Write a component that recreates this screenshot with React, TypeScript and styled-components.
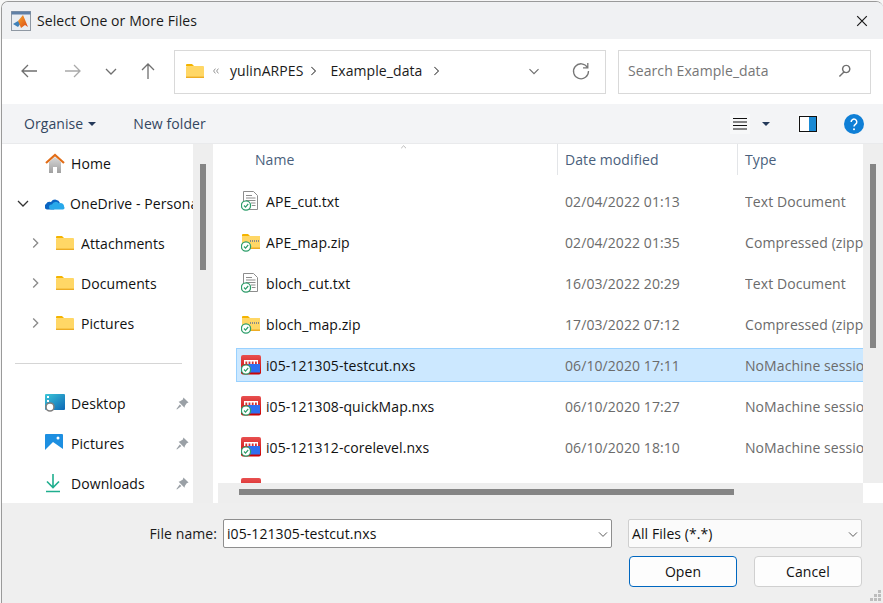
import styled, { createGlobalStyle } from "styled-components";

const GlobalStyle = createGlobalStyle`
  html, body {
    margin: 0;
    padding: 0;
    background: #fff;
  }
  body {
    font-family: "Open Sans", "Noto Sans", sans-serif;
    font-size: 14px;
    letter-spacing: 0.08px;
    color: #1a1a1a;
  }
`;

const Page = styled.div`
  width: 883px;
  height: 603px;
  padding: 1px 0 0 1px;
  box-sizing: border-box;
  overflow: hidden;
  background: #f6f6f6;
`;

const Dialog = styled.div`
  width: 882px;
  height: 602px;
  box-sizing: border-box;
  border: 1px solid #9a9a9a;
  border-right: 0;
  border-bottom: 0;
  border-radius: 7px 7px 0 0;
  overflow: hidden;
  display: flex;
  flex-direction: column;
  background: #fff;
`;

const TitleBar = styled.div`
  height: 37px;
  flex: none;
  display: flex;
  align-items: center;
  padding: 0 13px 0 9px;
  background: #f0f1f3;
  gap: 6px;
`;

const Title = styled.div`
  flex: 1;
`;

const NavBar = styled.div`
  height: 65px;
  flex: none;
  display: flex;
  align-items: center;
  background: #fff;
`;

const NavButton = styled.div<{ $w: number }>`
  width: ${(p) => p.$w}px;
  display: flex;
  justify-content: center;
  flex: none;
`;

const NavButtons = styled.div`
  width: 172px;
  flex: none;
  display: flex;
  padding: 0 0 1px 5px;
  box-sizing: border-box;
`;

const AddressBox = styled.div`
  width: 432px;
  height: 44px;
  box-sizing: border-box;
  border: 1px solid #d9d9d9;
  display: flex;
  align-items: center;
  padding: 0 0 2px 11px;
  flex: none;
`;

const Crumb = styled.span<{ $left: number }>`
  margin-left: ${(p) => p.$left}px;
  color: #1a1a1a;
`;

const CrumbMark = styled.span<{ $left: number }>`
  margin-left: ${(p) => p.$left}px;
  display: flex;
`;

const SearchBox = styled.div`
  width: 253px;
  height: 44px;
  margin-left: 12px;
  box-sizing: border-box;
  border: 1px solid #d9d9d9;
  display: flex;
  align-items: center;
  justify-content: space-between;
  padding: 0 17px 2px 9px;
  color: #767676;
  flex: none;
`;

const ToolBar = styled.div`
  height: 39px;
  flex: none;
  display: flex;
  align-items: center;
  background: #f3f4f6;
  padding: 0 18px 0 22px;
  color: #33465f;
`;

const ToolLabel = styled.span`
  color: #33465f;
`;

const Caret = styled.span<{ $left: number }>`
  width: 0;
  height: 0;
  margin-left: ${(p) => p.$left}px;
  border-left: 4px solid transparent;
  border-right: 4px solid transparent;
  border-top: 4px solid #24395a;
`;

const NewFolder = styled(ToolLabel)`
  margin-left: 37px;
  flex: 1;
`;

const ToolIcon = styled.span<{ $left: number; $w: number; $tile?: boolean }>`
  width: ${(p) => p.$w}px;
  height: 20px;
  margin-left: ${(p) => p.$left}px;
  display: flex;
  align-items: center;
  justify-content: center;
  background: ${(p) => (p.$tile ? "#f7f8f9" : "transparent")};
`;

const Content = styled.div`
  height: 360px;
  flex: none;
  display: flex;
  background: #fff;
  border-top: 1px solid #e9eaec;
  box-sizing: border-box;
`;

const Sidebar = styled.div`
  width: 191px;
  flex: none;
  overflow: hidden;
  background: #fff;
`;

const NavItem = styled.div<{ $icon: number }>`
  height: 40px;
  box-sizing: border-box;
  display: flex;
  align-items: center;
  white-space: nowrap;
  padding: 0 0 2px ${(p) => p.$icon}px;
`;

const Chevron = styled.span<{ $w: number }>`
  width: ${(p) => p.$w}px;
  flex: none;
  display: flex;
`;

const NavIcon = styled.span<{ $w: number }>`
  width: ${(p) => p.$w}px;
  flex: none;
  display: flex;
`;

const NavLabel = styled.span`
  flex: 1;
  overflow: hidden;
  color: #111;
`;

const PinSlot = styled.span`
  width: 17px;
  flex: none;
  display: flex;
`;

const Divider = styled.div`
  height: 1px;
  margin: 19px 11px 20px 13px;
  background: #d5d5d5;
`;

const VScroll = styled.div<{ $pad: number; $thumb: number }>`
  width: 20px;
  flex: 1;
  background: #eeeeee;
  padding-top: ${(p) => p.$pad}px;
  box-sizing: border-box;
  &::before {
    content: "";
    display: block;
    width: 6px;
    height: ${(p) => p.$thumb}px;
    margin-left: 7px;
    background: #858585;
  }
`;

const ScrollColumn = styled.div`
  width: 20px;
  flex: none;
  display: flex;
  flex-direction: column;
`;

const ScrollCorner = styled.div`
  height: 20px;
  flex: none;
  background: #fff;
`;

const Gutter = styled.div`
  width: 5px;
  flex: none;
  background: #fff;
`;

const FilePane = styled.div`
  width: 645px;
  flex: none;
  display: flex;
  flex-direction: column;
  background: #fff;
`;

const HeaderRow = styled.div`
  height: 40px;
  flex: none;
  display: grid;
  grid-template-columns: 340px 180px 125px;
  position: relative;
  color: #4a5f7c;
`;

const HeaderCell = styled.div<{ $pad: number; $line?: boolean }>`
  padding-left: ${(p) => p.$pad}px;
  padding-top: 6px;
  box-sizing: border-box;
  border-right: ${(p) => (p.$line ? "1px solid #e3e5e8" : "0")};
  height: 31px;
`;

const SortMark = styled.span`
  position: absolute;
  left: 182px;
  top: 0;
  display: flex;
`;

const Rows = styled.div`
  flex: 1;
  overflow: hidden;
  padding-left: 18px;
  display: flex;
  flex-direction: column;
  gap: 7px;
`;

const FileRow = styled.div<{ $selected?: boolean }>`
  height: 34px;
  flex: none;
  box-sizing: border-box;
  display: grid;
  grid-template-columns: 328px 180px 1fr;
  align-items: center;
  white-space: nowrap;
  overflow: hidden;
  background: ${(p) => (p.$selected ? "#cce8ff" : "transparent")};
  border: 1px solid ${(p) => (p.$selected ? "#99d1ff" : "transparent")};
  border-right: 0;
`;

const NameCell = styled.div`
  display: flex;
  align-items: center;
  gap: 5px;
  padding-left: 4px;
  color: #111;
`;

const MetaCell = styled.div`
  color: #6b6b6b;
  overflow: hidden;
`;

const HScroll = styled.div`
  height: 20px;
  flex: none;
  background: #eeeeee;
  padding: 6px 0 0 21px;
  box-sizing: border-box;
  &::before {
    content: "";
    display: block;
    width: 495px;
    height: 6px;
    background: #858585;
  }
`;

const Footer = styled.div`
  flex: 1;
  background: #efefef;
  position: relative;
  display: grid;
  grid-template-columns: 215px 389px 244px;
  grid-template-rows: 29px 31px;
  column-gap: 6px;
  row-gap: 8px;
  align-content: start;
  padding-top: 16px;
`;

const FileLabel = styled.label`
  justify-self: end;
  align-self: center;
  color: #1a1a1a;
`;

const ComboBox = styled.div<{ $strong?: boolean }>`
  height: 29px;
  box-sizing: border-box;
  background: ${(p) => (p.$strong ? "#fff" : "#fbfbfb")};
  border: 1px solid ${(p) => (p.$strong ? "#8e8e8e" : "#cfcfcf")};
  border-radius: 2px;
  display: flex;
  align-items: center;
  justify-content: space-between;
  padding: 0 0 0 3px;
  color: #111;
`;

const FilterBox = styled(ComboBox)`
  margin-left: 10px;
`;

const Buttons = styled.div`
  grid-column: 3;
  display: flex;
  gap: 17px;
  margin-left: 11px;
`;

const ActionButton = styled.button<{ $primary?: boolean }>`
  width: 108px;
  height: 31px;
  padding: 0;
  font: inherit;
  letter-spacing: inherit;
  color: #111;
  background: #fdfdfd;
  border: 1px solid ${(p) => (p.$primary ? "#0067c0" : "#d0d0d0")};
  border-radius: 4px;
`;

const Grip = styled.span`
  position: absolute;
  right: 1px;
  bottom: 1px;
  display: flex;
`;

function MatlabLogo() {
  return (
    <svg width="20" height="20" viewBox="0 0 20 20">
      <defs>
        <linearGradient id="peak" x1="0" y1="0" x2="1" y2="1">
          <stop offset="0" stopColor="#f7a428" />
          <stop offset="1" stopColor="#d8481a" />
        </linearGradient>
      </defs>
      <rect x="0.5" y="0.5" width="19" height="19" fill="#e9edf2" stroke="#8f98a3" />
      <rect x="0.5" y="0.5" width="19" height="3" fill="#5f7fa6" />
      <path d="M2 13 L7 10 L10 12 L7 16 Z" fill="#3d7fb8" />
      <path d="M7 10 L12 4 L17 16 L14 14 L10 17 L8 12 Z" fill="url(#peak)" />
    </svg>
  );
}

function FolderIcon({ size = 18 }: { size?: number }) {
  return (
    <svg width={size} height={(size * 14) / 18} viewBox="0 0 18 14">
      <path d="M0 1 a1 1 0 0 1 1-1 h5 l2 2 h-8 z" fill="#f4b400" />
      <rect x="0" y="2" width="18" height="12" rx="1" fill="#ffd766" />
      <rect x="0" y="12.6" width="18" height="1.4" fill="#edac24" />
    </svg>
  );
}

function Line({ d, color = "#6f6f6f", size = 20, width = 1.3 }: { d: string; color?: string; size?: number; width?: number }) {
  return (
    <svg width={size} height={size} viewBox="0 0 20 20" fill="none" stroke={color} strokeWidth={width}>
      <path d={d} />
    </svg>
  );
}

const chevronDown = "M5 8 L10 13 L15 8";
const chevronRight = "M8 5 L13 10 L8 15";

function HomeIcon() {
  return (
    <svg width="20" height="20" viewBox="0 0 20 20">
      <defs>
        <linearGradient id="homeBody" x1="0" y1="0" x2="0" y2="1">
          <stop offset="0" stopColor="#d8d8d8" />
          <stop offset="1" stopColor="#a0a0a0" />
        </linearGradient>
      </defs>
      <path d="M4 9 L10 4 L16 9 V20 H12 V14 H8 V20 H4 Z" fill="url(#homeBody)" />
      <path d="M1 10 L10 2 L19 10" fill="none" stroke="#e26d17" strokeWidth="2.2" />
    </svg>
  );
}

function CloudIcon() {
  return (
    <svg width="20" height="14" viewBox="0 0 20 14">
      <path d="M2 13.5 a3 3 0 0 1 -1-5.5 a4 4 0 0 1 5-2 a5 5 0 0 1 9 1 L9 13.5 Z" fill="#0a64c2" />
      <path d="M6 13.5 a2.5 2.5 0 0 1 1-5 a4 4 0 0 1 7-1 a3.2 3.2 0 0 1 5 3 a2 2 0 0 1 -1 3 Z" fill="#28a8ea" />
    </svg>
  );
}

function DesktopIcon() {
  return (
    <svg width="20" height="18" viewBox="0 0 20 18">
      <defs>
        <linearGradient id="desk" x1="0" y1="0" x2="1" y2="1">
          <stop offset="0" stopColor="#3cc6d8" />
          <stop offset="1" stopColor="#0d66b5" />
        </linearGradient>
      </defs>
      <rect x="0" y="0" width="20" height="16" rx="1" fill="url(#desk)" />
      <rect x="2" y="2" width="2" height="2" fill="#fff" />
      <rect x="2" y="6" width="2" height="2" fill="#fff" />
      <circle cx="5" cy="13" r="4" fill="#fff" stroke="#7f7f7f" strokeWidth="1.6" />
    </svg>
  );
}

function PicturesIcon() {
  return (
    <svg width="18" height="18" viewBox="0 0 18 18">
      <rect width="18" height="18" rx="1" fill="#1d8fe1" />
      <circle cx="13" cy="4" r="1.5" fill="#fff" />
      <path d="M0 16 L8 8 L18 15 V18 H0 Z" fill="#fff" />
    </svg>
  );
}

function DownloadIcon() {
  return (
    <svg width="16" height="20" viewBox="0 0 16 20" fill="none" stroke="#1fae8e" strokeWidth="1.6">
      <path d="M8 1 V14 M2 8.5 L8 14.5 L14 8.5 M1 18.5 H15" />
    </svg>
  );
}

function PinIcon() {
  return (
    <svg width="13" height="13" viewBox="0 0 14 14" fill="#9aa0a6">
      <path d="M8 0.5 L13.5 6 L11.5 6.8 L9.5 9.8 L9.2 11.5 L2.8 5 L4.4 4.6 L7.4 2.6 Z" />
      <path d="M4 8 L5.8 9.8 L1 13.5 L0.5 13 Z" />
    </svg>
  );
}

function SyncBadge() {
  return (
    <g>
      <circle cx="5" cy="14.5" r="4.6" fill="#fff" stroke="#2e9e6b" strokeWidth="1.3" />
      <path d="M3 14.5 L4.5 16.1 L7.2 13" fill="none" stroke="#2e9e6b" strokeWidth="1.2" />
    </g>
  );
}

function TextFileIcon() {
  return (
    <svg width="20" height="20" viewBox="0 0 20 20">
      <path d="M2.5 0.5 H12.5 L16.5 4.5 V18.5 H2.5 Z" fill="#fff" stroke="#8d8d8d" />
      <path d="M5 4.5 H11 M5 7 H14.5 M5 9.5 H14.5 M10 12 H14.5 M11 14.5 H14.5" stroke="#8d8d8d" />
      <SyncBadge />
    </svg>
  );
}

function ZipIcon() {
  return (
    <svg width="20" height="20" viewBox="0 0 20 20">
      <path d="M1 3 a1 1 0 0 1 1-1 h5 l2 2 H1 Z" fill="#f4b400" />
      <rect x="1" y="4" width="18" height="13" fill="#ffd766" />
      <rect x="1" y="15.5" width="18" height="1.5" fill="#edac24" />
      <path d="M9 9 H19" stroke="#8a8a8a" strokeWidth="2" strokeDasharray="1 1" />
      <SyncBadge />
    </svg>
  );
}

function SessionIcon() {
  return (
    <svg width="20" height="20" viewBox="0 0 20 20">
      <defs>
        <linearGradient id="sessionRed" x1="0" y1="0" x2="0" y2="1">
          <stop offset="0" stopColor="#e85050" />
          <stop offset="1" stopColor="#c80000" />
        </linearGradient>
      </defs>
      <rect x="0" y="0" width="20" height="19.5" rx="2" fill="url(#sessionRed)" />
      <path d="M3 5 H17 V9 H15.8 V6.5 H14 V9 H12.6 V6.5 H10.8 V9 H9.4 V6.5 H7.6 V9 H6.2 V6.5 H4.4 V9 H3 Z" fill="#fff" />
      <rect x="7" y="9" width="12" height="8.5" fill="#2f6ff0" />
      <SyncBadge />
    </svg>
  );
}

const files = [
  { icon: <TextFileIcon />, name: "APE_cut.txt", date: "02/04/2022 01:13", type: "Text Document" },
  { icon: <ZipIcon />, name: "APE_map.zip", date: "02/04/2022 01:35", type: "Compressed (zipped) Folder" },
  { icon: <TextFileIcon />, name: "bloch_cut.txt", date: "16/03/2022 20:29", type: "Text Document" },
  { icon: <ZipIcon />, name: "bloch_map.zip", date: "17/03/2022 07:12", type: "Compressed (zipped) Folder" },
  { icon: <SessionIcon />, name: "i05-121305-testcut.nxs", date: "06/10/2020 17:11", type: "NoMachine session file", selected: true },
  { icon: <SessionIcon />, name: "i05-121308-quickMap.nxs", date: "06/10/2020 17:27", type: "NoMachine session file" },
  { icon: <SessionIcon />, name: "i05-121312-corelevel.nxs", date: "06/10/2020 18:10", type: "NoMachine session file" },
  { icon: <SessionIcon />, name: "", date: "", type: "" },
];

export default function App() {
  return (
    <Page>
      <GlobalStyle />
      <Dialog>
        <TitleBar>
          <MatlabLogo />
          <Title>Select One or More Files</Title>
          <Line d="M4 4 L16 16 M16 4 L4 16" color="#1a1a1a" size={16} width={1.5} />
        </TitleBar>
        <NavBar>
          <NavButtons>
            <NavButton $w={44}><Line d="M18 10 H3 M9 4 L3 10 L9 16" /></NavButton>
            <NavButton $w={44}><Line d="M2 10 H17 M11 4 L17 10 L11 16" color="#a9a9a9" /></NavButton>
            <NavButton $w={32}><Line d={chevronDown} /></NavButton>
            <NavButton $w={42}><Line d="M10 18 V3 M4 9 L10 3 L16 9" /></NavButton>
          </NavButtons>
          <AddressBox>
            <FolderIcon />
            <CrumbMark $left={6}>
              <Line d="M9 6 L6 10 L9 14 M14 6 L11 10 L14 14" size={12} color="#777" />
            </CrumbMark>
            <Crumb $left={8}>yulinARPES</Crumb>
            <CrumbMark $left={2}><Line d={chevronRight} size={16} color="#444" /></CrumbMark>
            <Crumb $left={9}>Example_data</Crumb>
            <CrumbMark $left={6}><Line d={chevronRight} size={16} color="#444" /></CrumbMark>
            <CrumbMark $left={81}><Line d={chevronDown} size={18} /></CrumbMark>
            <CrumbMark $left={28}>
              <Line d="M16.5 6.5 A7.5 7.5 0 1 0 17.5 10 M16.8 2 V6.8 H12" color="#777" />
            </CrumbMark>
          </AddressBox>
          <SearchBox>
            <span>Search Example_data</span>
            <Line d="M9 11 L3 17 M11.5 3 a4.5 4.5 0 1 1 -0.01 0" color="#707070" size={16} width={1.8} />
          </SearchBox>
        </NavBar>
        <ToolBar>
          <ToolLabel>Organise</ToolLabel>
          <Caret $left={5} />
          <NewFolder>New folder</NewFolder>
          <ToolIcon $left={0} $w={20} $tile>
            <Line d="M3 4.5 H17 M3 8 H17 M3 11.5 H17 M3 15 H17" color="#111" size={20} width={1} />
          </ToolIcon>
          <Caret $left={12} />
          <ToolIcon $left={28} $w={20} $tile>
            <svg width="18" height="16" viewBox="0 0 18 16">
              <rect x="0.5" y="0.5" width="17" height="15" fill="#fff" stroke="#111" />
              <rect x="10" y="1" width="7" height="14" fill="#1a8ad4" />
            </svg>
          </ToolIcon>
          <ToolIcon $left={25} $w={22}>
            <svg width="20" height="20" viewBox="0 0 20 20">
              <circle cx="10" cy="10" r="10" fill="#0f7fd6" />
              <path d="M7.2 8 a2.8 2.8 0 1 1 4.4 2.2 c-1 .7 -1.6 1.2 -1.6 2.4" fill="none" stroke="#fff" strokeWidth="1.5" />
              <circle cx="10" cy="15.2" r="1" fill="#fff" />
            </svg>
          </ToolIcon>
        </ToolBar>
        <Content>
          <Sidebar>
            <NavItem $icon={43}>
              <NavIcon $w={26}><HomeIcon /></NavIcon>
              <NavLabel>Home</NavLabel>
            </NavItem>
            <NavItem $icon={11}>
              <Chevron $w={32}><Line d={chevronDown} color="#333" size={20} /></Chevron>
              <NavIcon $w={25}><CloudIcon /></NavIcon>
              <NavLabel>OneDrive - Personal</NavLabel>
            </NavItem>
            {["Attachments", "Documents", "Pictures"].map((name) => (
              <NavItem $icon={24} key={name}>
                <Chevron $w={30}><Line d={chevronRight} color="#8a8a8a" size={18} width={1.5} /></Chevron>
                <NavIcon $w={25}><FolderIcon /></NavIcon>
                <NavLabel>{name}</NavLabel>
              </NavItem>
            ))}
            <Divider />
            <NavItem $icon={43}>
              <NavIcon $w={26}><DesktopIcon /></NavIcon>
              <NavLabel>Desktop</NavLabel>
              <PinSlot><PinIcon /></PinSlot>
            </NavItem>
            <NavItem $icon={43}>
              <NavIcon $w={26}><PicturesIcon /></NavIcon>
              <NavLabel>Pictures</NavLabel>
              <PinSlot><PinIcon /></PinSlot>
            </NavItem>
            <NavItem $icon={43}>
              <NavIcon $w={26}><DownloadIcon /></NavIcon>
              <NavLabel>Downloads</NavLabel>
              <PinSlot><PinIcon /></PinSlot>
            </NavItem>
          </Sidebar>
          <ScrollColumn>
            <VScroll $pad={20} $thumb={106} />
          </ScrollColumn>
          <Gutter />
          <FilePane>
            <HeaderRow>
              <SortMark><Line d="M2 7 L6 3 L10 7" color="#8a8a8a" size={12} width={1} /></SortMark>
              <HeaderCell $pad={37} $line>Name</HeaderCell>
              <HeaderCell $pad={7} $line>Date modified</HeaderCell>
              <HeaderCell $pad={7}>Type</HeaderCell>
            </HeaderRow>
            <Rows>
              {files.map((file, i) => (
                <FileRow key={i} $selected={file.selected}>
                  <NameCell>{file.icon}<span>{file.name}</span></NameCell>
                  <MetaCell>{file.date}</MetaCell>
                  <MetaCell>{file.type}</MetaCell>
                </FileRow>
              ))}
            </Rows>
            <HScroll />
          </FilePane>
          <ScrollColumn>
            <VScroll $pad={20} $thumb={184} />
            <ScrollCorner />
          </ScrollColumn>
        </Content>
        <Footer>
          <FileLabel>File name:</FileLabel>
          <ComboBox $strong>
            <span>i05-121305-testcut.nxs</span>
            <Line d={chevronDown} color="#555" size={16} width={1.2} />
          </ComboBox>
          <FilterBox>
            <span>All Files (*.*)</span>
            <Line d={chevronDown} color="#555" size={16} width={1.2} />
          </FilterBox>
          <Buttons>
            <ActionButton $primary>Open</ActionButton>
            <ActionButton>Cancel</ActionButton>
          </Buttons>
          <Grip>
            <svg width="12" height="12" viewBox="0 0 12 12" fill="#bdbdbd">
              <rect x="8" y="0" width="3" height="3" />
              <rect x="4" y="4" width="3" height="3" />
              <rect x="8" y="4" width="3" height="3" />
              <rect x="0" y="8" width="3" height="3" />
              <rect x="4" y="8" width="3" height="3" />
              <rect x="8" y="8" width="3" height="3" />
            </svg>
          </Grip>
        </Footer>
      </Dialog>
    </Page>
  );
}
